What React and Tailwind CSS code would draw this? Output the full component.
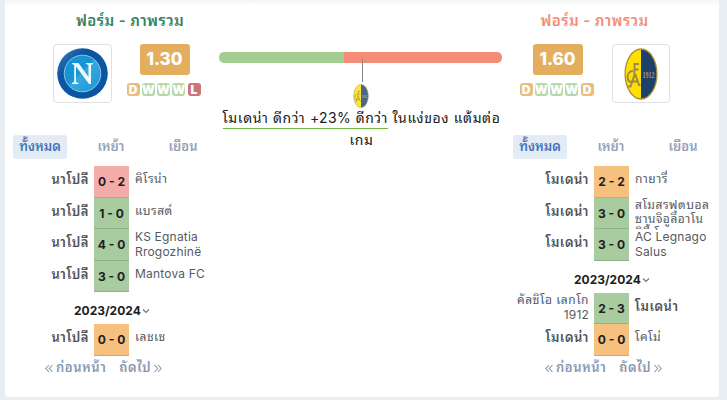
import React from 'react';

const scoreColors = {
  L: 'bg-[#f6abab] border-[#d59595]',
  W: 'bg-[#a8cb9f] border-[#8db085]',
  D: 'bg-[#f6c17f] border-[#d5a66c]',
};
const formColors = { L: 'bg-[#cc7576]', W: 'bg-[#b6d7a8]', D: 'bg-[#e9bd7c]' };

function NapoliLogo() {
  return (
    <svg width="51" height="51" viewBox="0 0 51 51">
      <defs>
        <linearGradient id="ring" x1="0" y1="0" x2="1" y2="1">
          <stop offset="0" stopColor="#3f83bf" />
          <stop offset="0.3" stopColor="#0a56a0" />
          <stop offset="1" stopColor="#0a55a4" />
        </linearGradient>
        <linearGradient id="disc" x1="0" y1="0" x2="1" y2="1">
          <stop offset="0.45" stopColor="#1794d3" />
          <stop offset="0.5" stopColor="#36a8dd" />
          <stop offset="1" stopColor="#1b95d3" />
        </linearGradient>
      </defs>
      <circle cx="25.5" cy="25.5" r="25.3" fill="url(#ring)" />
      <circle cx="25.5" cy="25.5" r="18.3" fill="url(#disc)" stroke="#a9d5ef" strokeWidth="0.8" />
      <path d="M15 15h6.500l10 14V17l-2.500-1V15h7v1L34 17v19h-2L19 18.500V34l2.500 1v1H15v-1l2.200-1V17L15 16z" fill="#eef9ff" />
    </svg>
  );
}

function ModenaLogo({ className }) {
  return (
    <svg className={className} viewBox="0 0 34 52">
      <path d="M17 1a16 25 0 0 0 0 50z" fill="#ffdf00" />
      <path d="M17 1a16 25 0 0 1 0 50z" fill="#1d4169" />
      <ellipse cx="17" cy="26" rx="15.900" ry="25" fill="none" stroke="#a8903c" strokeWidth="1.300" />
      <path d="M10.500 28V16h4.500M10.500 21.500h4M9 23c-7 0-7.500 12 0 11.500M4 38.500h2.500L10.500 27h1l3.500 10h1.500M7 33.500h7.500" fill="none" stroke="#9c874a" strokeWidth="1.900" />
      <text x="18.500" y="30" fontSize="9" textLength="12" lengthAdjust="spacingAndGlyphs" fill="#a4986f" fontFamily="Liberation Serif, serif" fontWeight="700">1912</text>
    </svg>
  );
}

function Heading({ color }) {
  return (
    <h2 className={`mt-[10px] flex h-5 items-center justify-center pt-0.5 pl-px whitespace-nowrap text-[15px] font-semibold tracking-[0.4px] ${color}`}>ฟอร์ม - ภาพรวม</h2>
  );
}

function Rating({ value, form }) {
  return (
    <div className="flex w-[75px] flex-col items-center">
      <div className="ml-0.5 flex h-[31px] w-[50px] items-center justify-center rounded-[3px] bg-[#e3af5f] pt-px text-[17px] font-extrabold text-white">{value}</div>
      <div className="mt-2 flex gap-[2.250px]">
        {form.split('').map((r, i) => (
          <span key={i} className={`flex h-[13px] w-[13px] items-center justify-center rounded-[3px] text-[12px] leading-none font-black text-white ${formColors[r]}`}>{r}</span>
        ))}
      </div>
    </div>
  );
}

function LogoBox({ children, width }) {
  return <div className={`flex h-[59px] items-center justify-center rounded-[4px] border border-[#dfe0ea] bg-white ${width}`}>{children}</div>;
}

function Tabs() {
  return (
    <div className="mt-[32px] flex h-6 items-center text-[13px] font-semibold whitespace-nowrap text-[#93a1b8]">
      <span className="flex h-6 w-[54px] items-center justify-center rounded-[3px] bg-[#e3ebf5] text-[#4672b8]">ทั้งหมด</span>
      <span className="ml-[17px] w-[54px] text-center">เหย้า</span>
      <span className="ml-[18px] w-[54px] text-center">เยือน</span>
    </div>
  );
}

const isThai = (text) => /[\u0e00-\u0e7f]/.test(text);

function TeamName({ lines, own }) {
  if (own) {
    return <div className="pt-[5px] text-[13px] leading-4 font-semibold tracking-[0.5px] text-[#50545a]">{lines[0]}</div>;
  }
  const single = isThai(lines[0]) ? 'pt-[6px]' : 'pt-[5px]';
  const pad = lines.length > 1 ? 'max-h-[32px] overflow-hidden' : single;
  return (
    <div className={`text-[12px] text-[#555a62] ${pad}`}>
      {lines.map((l) => (
        <span key={l} className={`block ${isThai(l) ? 'leading-[14px] tracking-[0.5px]' : 'leading-[15px] tracking-[0.2px]'}`}>{l}</span>
      ))}
    </div>
  );
}

function Match({ home, away, score, result, own = 'home' }) {
  return (
    <div className="flex h-[31.500px] whitespace-nowrap">
      <div className="flex w-[81px] items-start justify-end pr-[5px] text-right"><TeamName lines={home} own={own === 'home'} /></div>
      <div className={`flex w-[35px] items-center justify-center border-b pt-0.5 text-[12px] font-bold text-[#202020] ${scoreColors[result]}`}>{score}</div>
      <div className="flex flex-1 items-start pl-[6px]"><TeamName lines={away} own={own === 'away'} /></div>
    </div>
  );
}

function Season() {
  return (
    <div className="flex h-[32px] items-center pt-[6px] pl-[61px] text-[12px] font-bold text-[#202020]">
      2023/2024
      <svg className="ml-px" width="8" height="8" viewBox="0 0 8 8" fill="none" stroke="#64748b" strokeWidth="1.100"><path d="M1 2.500l3 3 3-3" /></svg>
    </div>
  );
}

function Chevrons({ right }) {
  return (
    <svg className={right ? 'mt-px rotate-180' : 'mt-px'} width="8" height="9" viewBox="0 0 8 9" fill="none" stroke="#8798b2" strokeWidth="1.100"><path d="M4 1L.8 4.500 4 8M7.500 1L4.300 4.500 7.500 8" /></svg>
  );
}

function Pager() {
  return (
    <div className="flex h-6 items-center pl-8 text-[13px] font-semibold tracking-[0.5px] whitespace-nowrap text-[#8798b2]">
      <span className="flex items-center gap-[3px]"><Chevrons />ก่อนหน้า</span>
      <span className="ml-[13px] flex items-center gap-[3px]">ถัดไป<Chevrons right /></span>
    </div>
  );
}

export default function App() {
  return (
    <div className="h-[400px] w-[727px] overflow-hidden bg-[#e9eef3] pl-[5px] font-[Inter,'Noto_Sans_Thai_Looped',Loma,'Noto_Sans_Thai','Noto_Sans',sans-serif]">
      <main className="flex h-[397px] w-[714px] rounded-b-[4px] bg-white bg-linear-to-b from-[#f3f5f5] to-white to-[6px]">
        <section className="w-[214px] pl-2">
          <div className="w-[233px]"><Heading color="text-[#368260]" /></div>
          <div className="mt-[14px] flex justify-between pr-[18px] pl-10">
            <LogoBox width="w-[59px]"><NapoliLogo /></LogoBox>
            <Rating value="1.30" form="DWWWL" />
          </div>
          <Tabs />
          <div className="mt-[7px]">
            <Match home={['นาโปลี']} away={['คิโรน่า']} score="0 - 2" result="L" />
            <Match home={['นาโปลี']} away={['แบรสต์']} score="1 - 0" result="W" />
            <Match home={['นาโปลี']} away={['KS Egnatia', 'Rrogozhinë']} score="4 - 0" result="W" />
            <Match home={['นาโปลี']} away={['Mantova FC']} score="3 - 0" result="W" />
            <Season />
            <Match home={['นาโปลี']} away={['เลชเช']} score="0 - 0" result="D" />
            <Pager />
          </div>
        </section>

        <section className="flex w-[283px] flex-col items-center pt-[52px]">
          <div className="flex h-[11px] w-full overflow-hidden rounded-[5px]">
            <span className="w-[125px] bg-[#a3cd91]" />
            <span className="flex-1 bg-[#f48c78]" />
          </div>
          <div className="z-10 -mt-1 ml-[3px] h-[23px] w-px bg-[#888]" />
          <ModenaLogo className="mt-[2px] h-6 w-4 opacity-80" />
          <p className="mt-[-1px] ml-0.5 text-center text-[14px] leading-[22px] tracking-[0.6px] whitespace-nowrap text-[#202020]">
            <span className="inline-block h-[22px] border-b border-[#75b544]">โมเดน่า ดีกว่า <span className="tracking-[0.4px]">+23%</span> ดีกว่า</span> ในแง่ของ แต้มต่อ<br />เกม
          </p>
        </section>

        <section className="w-[217px] pl-[11px]">
          <div className="w-[162px]"><Heading color="text-[#f48c78]" /></div>
          <div className="mt-[14px] flex gap-[18px] pl-[6px]">
            <Rating value="1.60" form="DWWWD" />
            <LogoBox width="w-[58px]"><ModenaLogo className="h-[52px] w-[34px]" /></LogoBox>
          </div>
          <Tabs />
          <div className="mt-[7px]">
            <Match home={['โมเดน่า']} away={['กายารี่']} score="2 - 2" result="D" />
            <Match home={['โมเดน่า']} away={['สโมสรฟุตบอล', 'ซานจิอูลิอาโน', 'ซิตี้ โนวา']} score="3 - 0" result="W" />
            <Match home={['โมเดน่า']} away={['AC Legnago', 'Salus']} score="3 - 0" result="W" />
            <Season />
            <Match home={['คัลซิโอ เลกโก', '1912']} away={['โมเดน่า']} score="2 - 3" result="W" own="away" />
            <Match home={['โมเดน่า']} away={['โคโม่']} score="0 - 0" result="D" />
            <Pager />
          </div>
        </section>
      </main>
    </div>
  );
}
